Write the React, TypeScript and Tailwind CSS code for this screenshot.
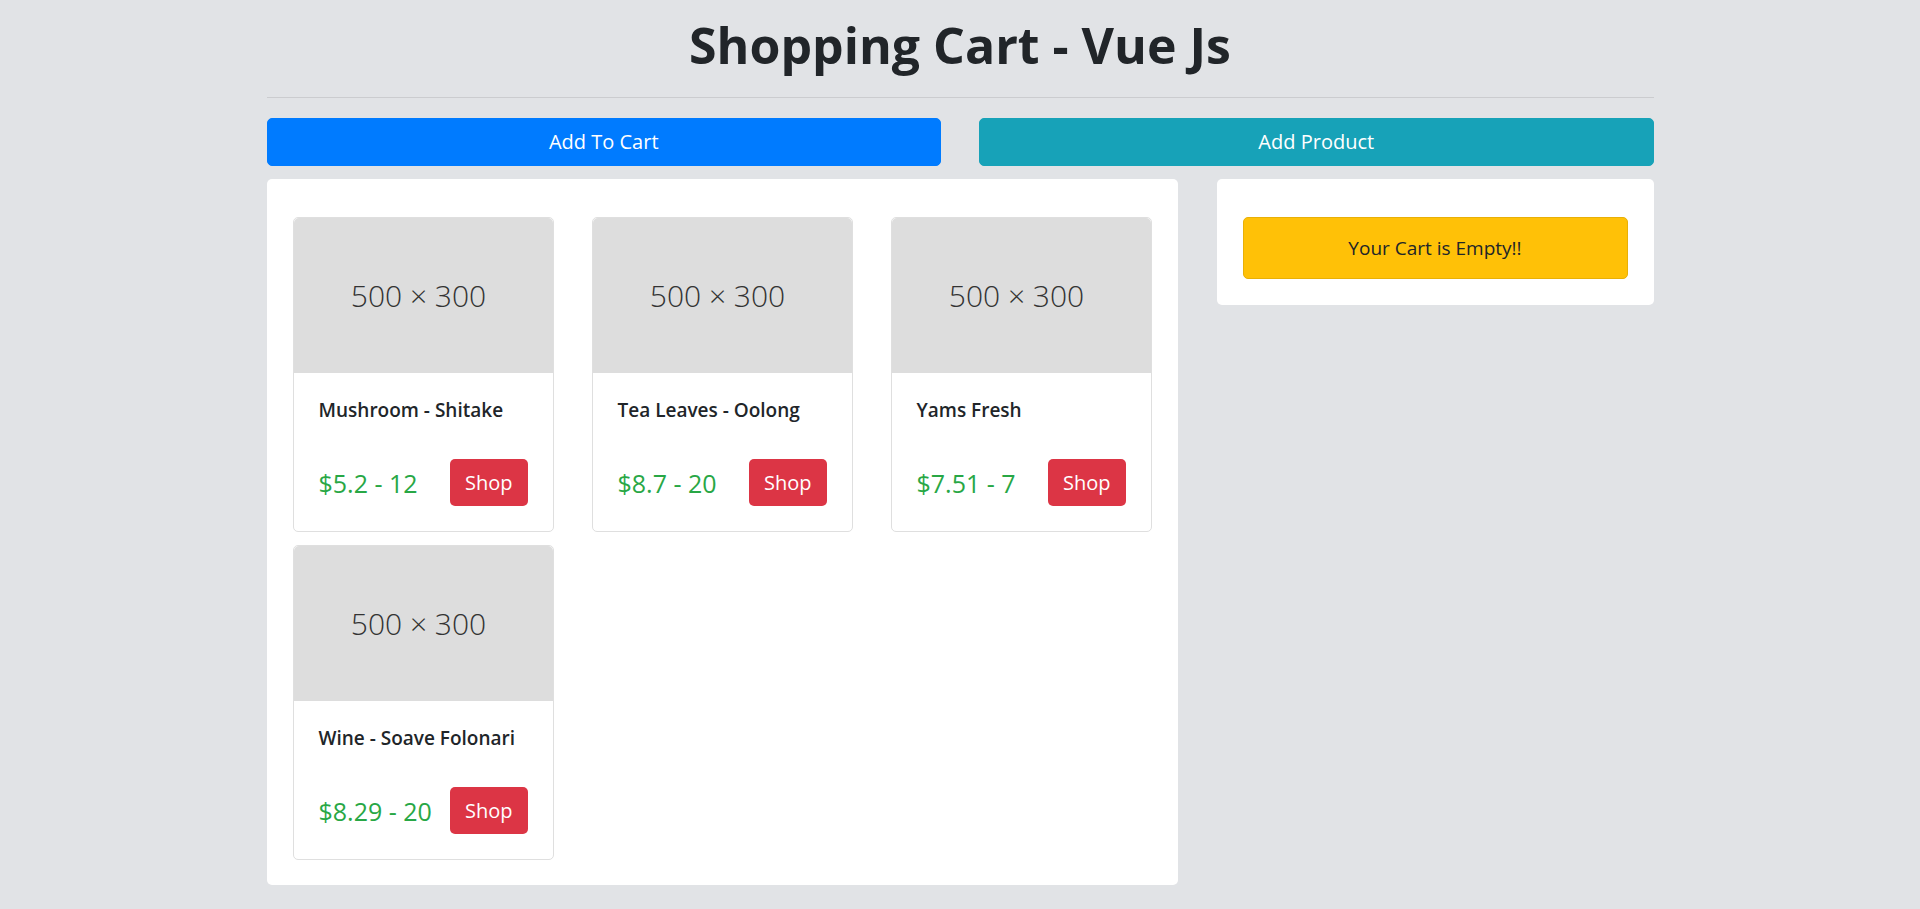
import React from "react";

interface Product {
  name: string;
  price: string;
  qty: number;
}

const products: Product[] = [
  { name: "Mushroom - Shitake", price: "5.2", qty: 12 },
  { name: "Tea Leaves - Oolong", price: "8.7", qty: 20 },
  { name: "Yams Fresh", price: "7.51", qty: 7 },
  { name: "Wine - Soave Folonari", price: "8.29", qty: 20 },
];

const ProductCard = ({ product }: { product: Product }) => {
  return (
    <div className="flex flex-col rounded-[5px] border border-[#dfdfdf] bg-white">
      <div className="flex h-[155px] items-center justify-center rounded-t-[5px] bg-[#dddddd] pr-[9px]">
        <span className="text-[30px] font-light text-[#333333]">500 × 300</span>
      </div>
      <div className="px-[25px] pt-[25px] pb-[25px]">
        <h5 className="text-[19px] leading-[24px] font-[550] text-[#212529]">
          {product.name}
        </h5>
        <div className="mt-[37px] flex items-center justify-between">
          <span className="text-[25px] leading-[30px] text-[#28a745]">
            ${product.price} - {product.qty}
          </span>
          <button className="h-[47px] rounded-[5px] bg-[#dc3545] px-[15px] text-[20px] text-white">
            Shop
          </button>
        </div>
      </div>
    </div>
  );
};

export default function App() {
  return (
    <div
      className="min-h-screen bg-[#e1e3e6] text-[#212529]"
      style={{ fontFamily: '"Open Sans", "Noto Sans", sans-serif' }}
    >
      <div className="mx-auto w-[1387px] pt-[15px]">
        <h1 className="text-center text-[50px] leading-[60px] font-bold text-[#212529]">
          Shopping Cart - Vue Js
        </h1>
        <hr className="mt-[22px] border-t border-[#cbcccf]" />

        <div className="mt-[20px] grid grid-cols-2 gap-x-[38px]">
          <button className="h-[48px] rounded-[5px] border border-[#007bff] bg-[#007bff] text-[20px] text-white">
            Add To Cart
          </button>
          <button className="h-[48px] rounded-[5px] border border-[#17a2b8] bg-[#17a2b8] text-[20px] text-white">
            Add Product
          </button>
        </div>

        <div className="mt-[13px] flex items-start gap-x-[39px]">
          <div className="w-[911px] rounded-[5px] bg-white px-[26px] pt-[38px] pb-[25px]">
            <div className="grid grid-cols-3 gap-x-[38px] gap-y-[13px]">
              {products.map((p) => (
                <ProductCard key={p.name} product={p} />
              ))}
            </div>
          </div>

          <div className="w-[437px] rounded-[5px] bg-white px-[26px] pt-[38px] pb-[26px]">
            <div className="flex h-[62px] items-center justify-center rounded-[5px] border border-[#e8b007] bg-[#ffc107] text-[19px] text-[#212529]">
              Your Cart is Empty!!
            </div>
          </div>
        </div>
      </div>
    </div>
  );
}
